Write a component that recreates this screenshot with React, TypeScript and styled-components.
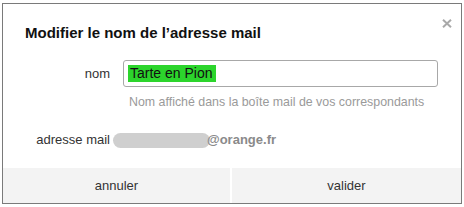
import React from "react";
import styled, { createGlobalStyle } from "styled-components";

const Global = createGlobalStyle`
  html, body { margin: 0; padding: 0; background: #ffffff; }
  body { font-family: "Liberation Sans", Arial, sans-serif; }
`;

const Dialog = styled.div`
  position: relative;
  margin: 3px 0 0 2px;
  width: 458px;
  height: 199px;
  border: 1px solid #7a7a7a;
  background: #fff;
  display: flex;
  flex-direction: column;
`;

const Close = styled.button`
  position: absolute;
  top: 12px;
  right: 7px;
  width: 14px;
  height: 14px;
  padding: 0;
  border: none;
  background: transparent;
  display: flex;
  align-items: center;
  justify-content: center;
`;

const Title = styled.h1`
  margin: 0;
  padding: 19px 0 0 22px;
  font-size: 15px;
  font-weight: bold;
  color: #111;
  line-height: 20px;
`;

const Form = styled.div`
  display: grid;
  grid-template-columns: 107px 1fr;
  column-gap: 13px;
  padding: 17px 23px 0 0;
  flex: 1;
  align-content: start;
`;

const Label = styled.div<{ $top: number }>`
  text-align: right;
  font-size: 13px;
  color: #333;
  padding-top: ${(p) => p.$top}px;
  line-height: 16px;
`;

const Input = styled.div`
  height: 25px;
  border: 1px solid #a8a8a8;
  border-radius: 3px;
  display: flex;
  align-items: center;
  padding-left: 4px;
`;

const Highlight = styled.span`
  background: #2cd52c;
  color: #111;
  font-size: 14px;
  line-height: 17px;
  padding: 0 3px 0 2px;
`;

const Hint = styled.div`
  grid-column: 2;
  font-size: 12.4px;
  color: #9a9a9a;
  padding: 7px 0 0 6px;
  line-height: 16px;
  white-space: nowrap;
`;

const Address = styled.div`
  display: flex;
  align-items: center;
  padding-top: 22px;
  margin-left: -10px;
`;

const Blur = styled.span`
  width: 97px;
  height: 15px;
  border-radius: 8px;
  background: #cfcfcf;
`;

const Domain = styled.span`
  font-size: 13px;
  font-weight: bold;
  color: #8a8a8a;
  margin-left: -3px;
  line-height: 16px;
`;

const Footer = styled.div`
  display: grid;
  grid-template-columns: 227px 1fr;
  column-gap: 2px;
  height: 35px;
  background: #ffffff;
`;

const FooterButton = styled.button`
  border: none;
  background: #f3f3f3;
  font-family: "Liberation Sans", Arial, sans-serif;
  font-size: 13px;
  color: #333;
  padding: 0;
`;

export default function App() {
  return (
    <>
      <Global />
      <Dialog>
        <Close aria-label="fermer">
          <svg width="10" height="9" viewBox="0 0 10 9">
            <path d="M1 0.8 L9 8.2 M9 0.8 L1 8.2" stroke="#a9a9a9" strokeWidth="2" />
          </svg>
        </Close>
        <Title>Modifier le nom de l’adresse mail</Title>
        <Form>
          <Label $top={6}>nom</Label>
          <Input>
            <Highlight>Tarte en Pion</Highlight>
          </Input>
          <Hint>Nom affiché dans la boîte mail de vos correspondants</Hint>
          <Label $top={22}>adresse mail</Label>
          <Address>
            <Blur />
            <Domain>@orange.fr</Domain>
          </Address>
        </Form>
        <Footer>
          <FooterButton>annuler</FooterButton>
          <FooterButton>valider</FooterButton>
        </Footer>
      </Dialog>
    </>
  );
}
